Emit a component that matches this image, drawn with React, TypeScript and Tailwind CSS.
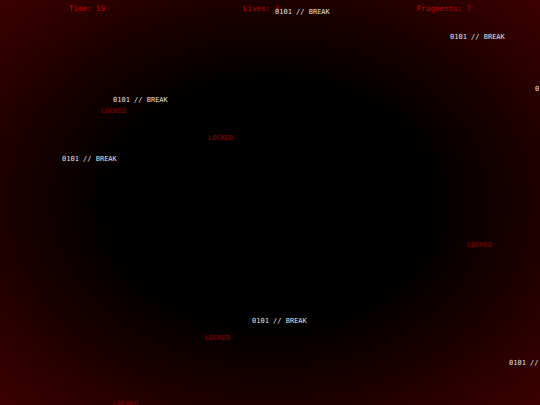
const BREAKS = [
  { x: 275, y: 8 },
  { x: 450, y: 33 },
  { x: 535, y: 85 },
  { x: 113, y: 96 },
  { x: 62, y: 155 },
  { x: 252, y: 317 },
  { x: 509, y: 359 },
];

const LOCKS = [
  { x: 101, y: 107 },
  { x: 208, y: 134 },
  { x: 467, y: 241 },
  { x: 205, y: 334 },
  { x: 113, y: 400 },
];

export default function App() {
  return (
    <div className="relative h-[405px] w-[540px] overflow-hidden bg-[radial-gradient(ellipse_at_center,#000_42%,#3d0000_100%)] font-['DejaVu_Sans_Mono','Liberation_Mono',monospace]">
      <div className="flex justify-around pt-[4px] text-[7.5px] leading-[10px] text-[#c40000]">
        <span>Time: 19</span>
        <span>Lives: 3</span>
        <span>Fragments: 7</span>
      </div>

      {LOCKS.map((l, i) => (
        <span
          key={"l" + i}
          className="absolute whitespace-nowrap text-[7px] leading-[8px] text-[#7a0000] [text-shadow:0_0_2px_#500000]"
          style={{ left: l.x, top: l.y }}
        >
          LOCKED
        </span>
      ))}

      {BREAKS.map((b, i) => (
        <span
          key={"b" + i}
          className="absolute whitespace-nowrap text-[7px] leading-[8px] text-[#e2e2e2]"
          style={{ left: b.x, top: b.y }}
        >
          0101 // BREAK
        </span>
      ))}
    </div>
  );
}
